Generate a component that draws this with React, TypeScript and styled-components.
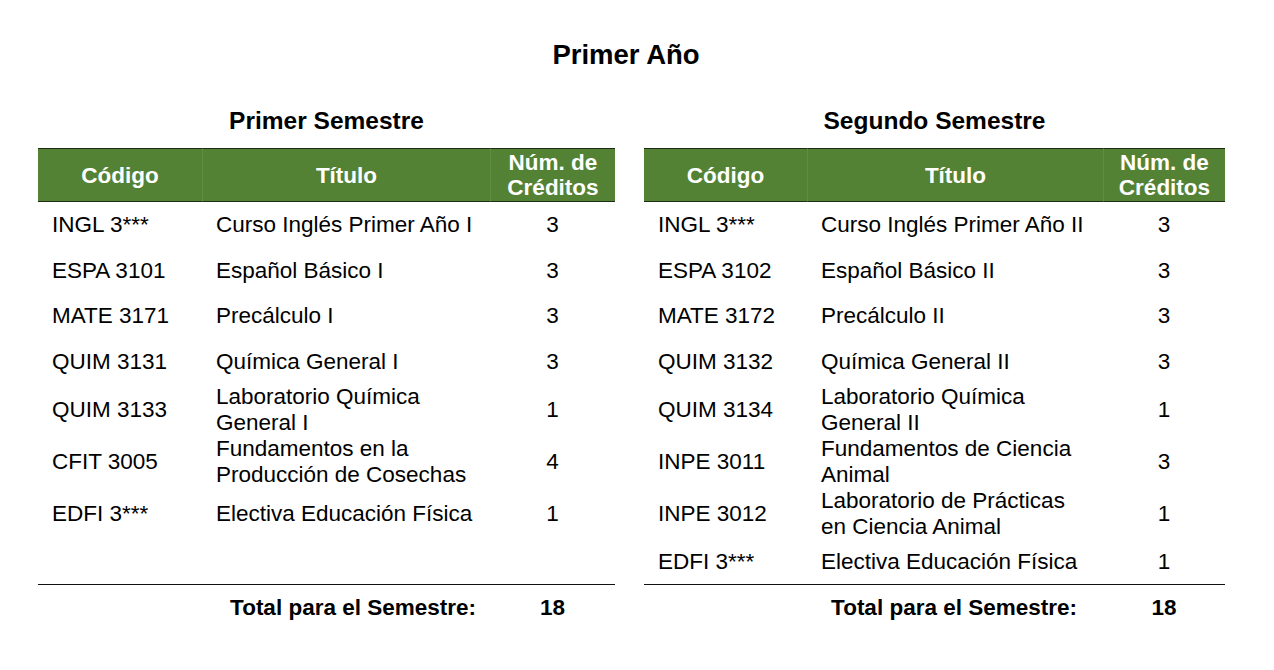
import styled, { createGlobalStyle } from 'styled-components';

const GlobalStyle = createGlobalStyle`
  body {
    margin: 0;
    background: #ffffff;
    font-family: 'Liberation Sans', Arial, sans-serif;
    color: #000000;
  }
`;

const Page = styled.div`
  width: 1274px;
  height: 670px;
  padding: 39px 0 0 38px;
  box-sizing: border-box;
`;

const YearTitle = styled.h1`
  margin: 0 0 36px 0;
  width: 1176px;
  text-align: center;
  font-size: 27.5px;
  line-height: 32px;
  font-weight: 700;
`;

const Semesters = styled.div`
  display: flex;
  gap: 29px;
  align-items: flex-start;
`;

const Semester = styled.section<{ $width: number }>`
  width: ${(p) => p.$width}px;
`;

const SemesterTitle = styled.h2`
  margin: 0 0 13px 0;
  text-align: center;
  font-size: 24.5px;
  line-height: 28px;
  font-weight: 700;
`;

const Grid = styled.div<{ $cols: string }>`
  display: grid;
  grid-template-columns: ${(p) => p.$cols};
`;

const HeadCell = styled.div<{ $first?: boolean }>`
  height: 52px;
  background: #548235;
  border-top: 1px solid #1f2a17;
  border-bottom: 1px solid #1f2a17;
  border-left: ${(p) => (p.$first ? 'none' : '1px solid #5f8c41')};
  color: #ffffff;
  font-weight: 700;
  font-size: 22.5px;
  line-height: 25px;
  display: flex;
  align-items: center;
  justify-content: center;
  text-align: center;
`;

const Cell = styled.div<{ $h: number; $align?: string; $last?: boolean }>`
  height: ${(p) => p.$h}px;
  box-sizing: border-box;
  display: flex;
  align-items: center;
  justify-content: ${(p) => p.$align || 'flex-start'};
  padding: 0 14px;
  font-size: 22.5px;
  line-height: 26px;
  white-space: nowrap;
  border-bottom: ${(p) => (p.$last ? '1px solid #111' : 'none')};
`;

const TotalLabel = styled.div<{ $pad?: number }>`
  height: 46px;
  display: flex;
  align-items: center;
  justify-content: flex-end;
  padding-right: ${(p) => p.$pad ?? 14}px;
  font-weight: 700;
  font-size: 22.5px;
  white-space: nowrap;
`;

const TotalValue = styled(TotalLabel)`
  justify-content: center;
  padding-right: 0;
`;

type Course = { code: string; title: string[]; credits: string };

const first: Course[] = [
  { code: 'INGL 3***', title: ['Curso Inglés Primer Año I'], credits: '3' },
  { code: 'ESPA 3101', title: ['Español Básico I'], credits: '3' },
  { code: 'MATE 3171', title: ['Precálculo I'], credits: '3' },
  { code: 'QUIM 3131', title: ['Química General I'], credits: '3' },
  { code: 'QUIM 3133', title: ['Laboratorio Química', 'General I'], credits: '1' },
  { code: 'CFIT 3005', title: ['Fundamentos en la', 'Producción de Cosechas'], credits: '4' },
  { code: 'EDFI 3***', title: ['Electiva Educación Física'], credits: '1' },
  { code: '', title: [''], credits: '' },
];

const second: Course[] = [
  { code: 'INGL 3***', title: ['Curso Inglés Primer Año II'], credits: '3' },
  { code: 'ESPA 3102', title: ['Español Básico II'], credits: '3' },
  { code: 'MATE 3172', title: ['Precálculo II'], credits: '3' },
  { code: 'QUIM 3132', title: ['Química General II'], credits: '3' },
  { code: 'QUIM 3134', title: ['Laboratorio Química', 'General II'], credits: '1' },
  { code: 'INPE 3011', title: ['Fundamentos de Ciencia', 'Animal'], credits: '3' },
  { code: 'INPE 3012', title: ['Laboratorio de Prácticas', 'en Ciencia Animal'], credits: '1' },
  { code: 'EDFI 3***', title: ['Electiva Educación Física'], credits: '1' },
];

// row heights follow the source document (single rows ~45, wrapped rows 52)
const heights = [46, 45, 46, 45, 52, 52, 52, 45];

type TableProps = {
  name: string;
  width: number;
  cols: string;
  courses: Course[];
  total: string;
  totalPad?: number;
};

function SemesterTable({ name, width, cols, courses, total, totalPad }: TableProps) {
  return (
    <Semester $width={width}>
      <SemesterTitle>{name}</SemesterTitle>
      <Grid $cols={cols}>
        <HeadCell $first>Código</HeadCell>
        <HeadCell>Título</HeadCell>
        <HeadCell>
          Núm. de
          <br />
          Créditos
        </HeadCell>
        {courses.map((c, i) => {
          const last = i === courses.length - 1;
          return [
            <Cell key={`c${i}`} $h={heights[i]} $last={last}>{c.code}</Cell>,
            <Cell key={`t${i}`} $h={heights[i]} $last={last}>
              <span>
                {c.title.map((t, j) => (
                  <span key={j}>
                    {j > 0 && <br />}
                    {t}
                  </span>
                ))}
              </span>
            </Cell>,
            <Cell key={`n${i}`} $h={heights[i]} $last={last} $align="center">{c.credits}</Cell>,
          ];
        })}
        <div />
        <TotalLabel $pad={totalPad}>Total para el Semestre:</TotalLabel>
        <TotalValue>{total}</TotalValue>
      </Grid>
    </Semester>
  );
}

export default function App() {
  return (
    <Page>
      <GlobalStyle />
      <YearTitle>Primer Año</YearTitle>
      <Semesters>
        <SemesterTable name="Primer Semestre" width={577} cols="164px 288px 125px" courses={first} total="18" />
        <SemesterTable
          name="Segundo Semestre"
          width={581}
          cols="163px 296px 122px"
          courses={second}
          total="18"
          totalPad={26}
        />
      </Semesters>
    </Page>
  );
}
